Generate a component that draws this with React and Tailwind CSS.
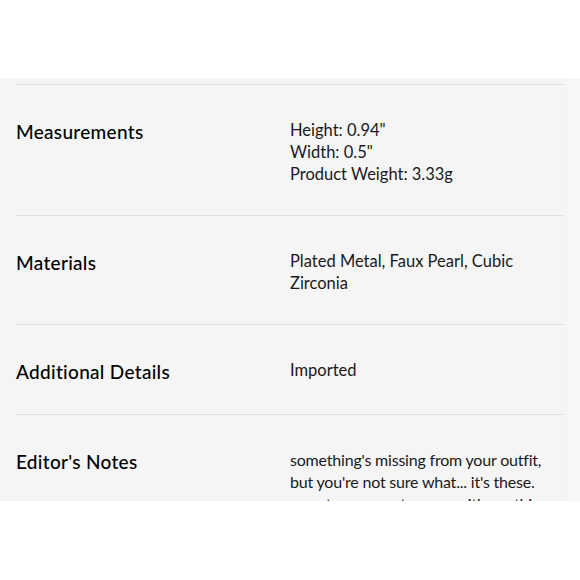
import React from 'react'

const ROWS = [
  { label: 'Measurements', lines: ['Height: 0.94"', 'Width: 0.5"', 'Product Weight: 3.33g'] },
  { label: 'Materials', lines: ['Plated Metal, Faux Pearl, Cubic', 'Zirconia'] },
  { label: 'Additional Details', lines: ['Imported'] },
  {
    label: "Editor's Notes",
    tight: true,
    lines: ["something's missing from your outfit,", "but you're not sure what... it's these.", 'so cute, so easy to wear with anything.'],
  },
]

export default function App() {
  return (
    <div className="w-[580px] h-[580px] bg-white font-['Lato',sans-serif] text-[#111]">
      <div className="h-[78px]" />
      <div className="flex h-[423px] overflow-hidden bg-[#f5f5f5]">
        <div className="flex-1 pl-4 pr-[2px] pt-[6px]">
          <div className="border-t border-[#e0e0e0]">
            {ROWS.map((r) => (
              <div key={r.label} className="grid grid-cols-[274px_1fr] border-b border-[#e0e0e0] pt-[34px] pb-[30px]">
                <div className="text-[19px] leading-[25px] font-medium tracking-[0.3px] text-black">{r.label}</div>
                <div
                  className={
                    r.tight
                      ? 'text-[16px] leading-[22px] tracking-[-0.2px] text-[#1a1a1a]'
                      : 'text-[16.5px] leading-[22px] text-[#1a1a1a]'
                  }
                >
                  {r.lines.map((l, i) => (
                    <div key={i} className="whitespace-nowrap">{l}</div>
                  ))}
                </div>
              </div>
            ))}
          </div>
        </div>
        <div className="w-[14px] border-l border-[#f0f0f0] bg-[#f7f7f7]" />
      </div>
    </div>
  )
}
